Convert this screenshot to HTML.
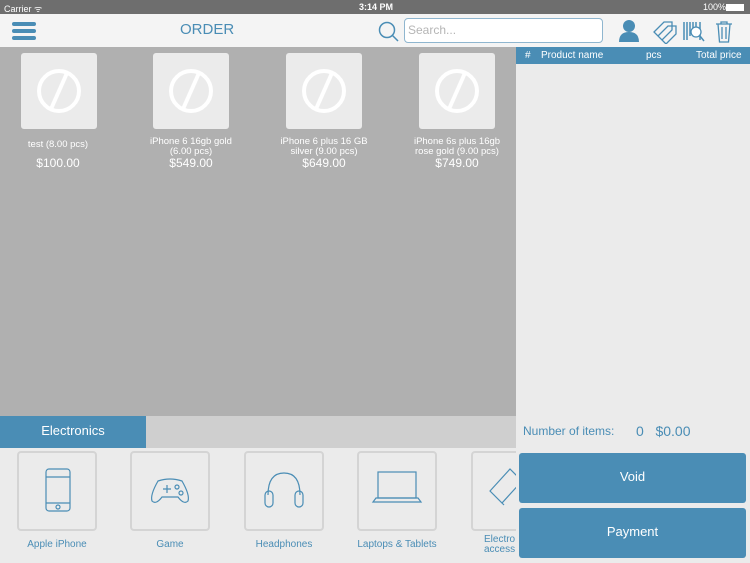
<html><head><style>
body{margin:0;width:750px;height:563px;overflow:hidden;position:relative;font-family:"Liberation Sans",sans-serif;background:#ebebeb}
.a{position:absolute}
.pt{position:absolute;width:76px;height:76px;top:53px;background:#ebebeb;border-radius:3px}
.pl{position:absolute;top:137px;width:120px;text-align:center;color:#fff;font-size:9.5px;line-height:10px}
.pp{position:absolute;top:156px;width:120px;text-align:center;color:#fff;font-size:12px}
.ct{position:absolute;top:451px;width:76px;height:76px;border:2px solid #d4d4d4;border-radius:4px;background:#ebebeb}
.cl{position:absolute;top:539px;width:120px;text-align:center;color:#4a8db5;font-size:10px}
.btn{position:absolute;left:519px;width:227px;height:50px;background:#4a8db5;border-radius:3px;color:#fff;font-size:13px;text-align:center;line-height:48px}
</style></head><body>
<div class="a" style="left:0;top:0;width:750px;height:14px;background:#6e6e6e;color:#fff;font-size:9px">
<span class="a" style="left:4px;top:2px">Carrier ᯤ</span><span class="a" style="left:359px;top:2px;font-weight:bold">3:14 PM</span><span class="a" style="left:703px;top:2px">100%</span><span class="a" style="left:726px;top:4px;width:18px;height:7px;background:#fff"></span></div>
<div class="a" style="left:0;top:14px;width:750px;height:33px;background:#f4f4f4"></div>
<div class="a" style="left:12px;top:22px;width:24px;height:4px;background:#4a8db5;border-radius:2px;box-shadow:0 7px 0 #4a8db5,0 14px 0 #4a8db5"></div>
<div class="a" style="left:180px;top:21px;color:#4a8db5;font-size:15px">ORDER</div>
<svg class="a" style="left:377px;top:20px" width="24" height="24"><circle cx="10" cy="10" r="7.5" fill="none" stroke="#4a8db5" stroke-width="1.5"/><path d="M15 15l6 6" stroke="#4a8db5" stroke-width="1.5"/></svg>
<div class="a" style="left:404px;top:18px;width:197px;height:23px;border:1px solid #8fb6cf;border-radius:4px;background:#fff;color:#b5b5b5;font-size:12px;line-height:23px;text-indent:3px">Search...</div>
<svg class="a" style="left:616px;top:18px" width="130" height="26"><circle cx="13" cy="8" r="6" fill="#4a8db5"/><path d="M3 24q0-10 10-10q10 0 10 10z" fill="#4a8db5"/>
<path d="M38 14l10-10h8v8l-10 10z M42 18l10-10h8v8l-10 10z" fill="none" stroke="#4a8db5" stroke-width="1.3"/>
<path d="M68 4v18M71 4v18M74 4v14M77 4v10M80 4v10M84 4v18" stroke="#4a8db5" stroke-width="1.5"/><circle cx="80" cy="14" r="5" fill="#fff" stroke="#4a8db5" stroke-width="1.3"/><path d="M84 18l4 5" stroke="#4a8db5" stroke-width="1.5"/>
<path d="M100 6h16M105 6v-2h6v2M102 6l1.5 18h9l1.5-18M106 9v12M110 9v12" fill="none" stroke="#4a8db5" stroke-width="1.3"/></svg>
<div class="a" style="left:0;top:47px;width:516px;height:369px;background:#b0b0b0"></div>
<div class="pt" style="left:21px"></div><div class="pt" style="left:153px"></div><div class="pt" style="left:286px"></div><div class="pt" style="left:419px"></div>
<svg class="a" style="left:0;top:53px" width="516" height="76"><g fill="none" stroke="#fff" stroke-width="4"><circle cx="59" cy="38" r="20"/><path d="M67 20l-16 36"/><circle cx="191" cy="38" r="20"/><path d="M199 20l-16 36"/><circle cx="324" cy="38" r="20"/><path d="M332 20l-16 36"/><circle cx="457" cy="38" r="20"/><path d="M465 20l-16 36"/></g></svg>
<div class="pl" style="left:-2px;top:140px">test (8.00 pcs)</div><div class="pp" style="left:-2px">$100.00</div>
<div class="pl" style="left:131px">iPhone 6 16gb gold<br>(6.00 pcs)</div><div class="pp" style="left:131px">$549.00</div>
<div class="pl" style="left:264px">iPhone 6 plus 16 GB<br>silver (9.00 pcs)</div><div class="pp" style="left:264px">$649.00</div>
<div class="pl" style="left:397px">iPhone 6s plus 16gb<br>rose gold (9.00 pcs)</div><div class="pp" style="left:397px">$749.00</div>
<div class="a" style="left:0;top:416px;width:516px;height:32px;background:#cfcfcf"></div>
<div class="a" style="left:0;top:416px;width:146px;height:32px;background:#4a8db5;color:#fff;font-size:13px;text-align:center;line-height:30px">Electronics</div>
<div class="ct" style="left:17px"></div><div class="ct" style="left:130px"></div><div class="ct" style="left:244px"></div><div class="ct" style="left:357px"></div><div class="ct" style="left:471px"></div>
<svg class="a" style="left:0;top:451px" width="516" height="80"><g fill="none" stroke="#4a8db5" stroke-width="1.2">
<rect x="46" y="18" width="24" height="42" rx="3"/><path d="M46 26h24M46 52h24"/><circle cx="58" cy="56" r="2"/>
<path d="M158 30q12-4 24 0q8 14 6 20q-4 4-10-4h-16q-6 8-10 4q-2-6 6-20z"/><path d="M163 38h8M167 34v8"/><circle cx="177" cy="36" r="2"/><circle cx="181" cy="42" r="2"/>
<path d="M268 44q0-22 16-22q16 0 16 22"/><rect x="265" y="40" width="8" height="16" rx="4"/><rect x="295" y="40" width="8" height="16" rx="4"/>
<rect x="378" y="21" width="38" height="26"/><path d="M373 51h48l-3-4h-42z"/>
<path d="M490 40l20-22l12 12l-20 22z M494 44l10 10"/></g></svg>
<div class="a" style="left:516px;top:448px;width:234px;height:115px;background:#ebebeb"></div>
<div class="cl" style="left:-3px">Apple iPhone</div><div class="cl" style="left:110px">Game</div><div class="cl" style="left:224px">Headphones</div><div class="cl" style="left:337px">Laptops &amp; Tablets</div>
<div class="a" style="left:484px;top:535px;color:#4a8db5;font-size:10px;line-height:10px">Electro<br>access</div>
<div class="a" style="left:516px;top:47px;width:234px;height:369px;background:#ebebeb"></div>
<div class="a" style="left:516px;top:47px;width:234px;height:17px;background:#4a8db5;color:#fff;font-size:10px;line-height:17px">
<span class="a" style="left:9px">#</span><span class="a" style="left:25px">Product name</span><span class="a" style="left:130px">pcs</span><span class="a" style="left:180px">Total price</span></div>
<div class="a" style="left:523px;top:424px;color:#4a8db5;font-size:12px">Number of items:</div>
<div class="a" style="left:636px;top:423px;color:#4a8db5;font-size:14px">0&nbsp;&nbsp;&nbsp;$0.00</div>
<div class="btn" style="top:453px">Void</div><div class="btn" style="top:508px">Payment</div>
</body></html>
